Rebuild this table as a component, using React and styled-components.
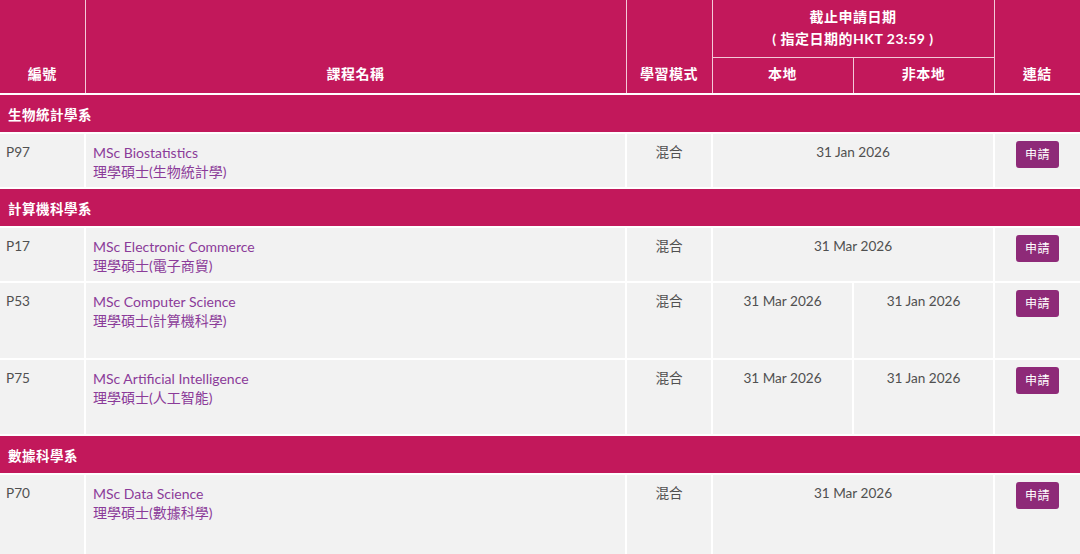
import React from "react";
import styled, { createGlobalStyle } from "styled-components";

const Global = createGlobalStyle`
  html, body { margin: 0; padding: 0; background: #f2f2f2; }
  body { font-family: "Lato", "Noto Sans CJK TC", sans-serif; }
`;

const MAGENTA = "#c2185b";

const Table = styled.table`
  width: 1080px;
  border-collapse: collapse;
  table-layout: fixed;
  font-family: "Lato", "Noto Sans CJK TC", sans-serif;
`;

const Head = styled.thead`
  background: ${MAGENTA};
`;

const Th = styled.th`
  box-sizing: border-box;
  color: #fff;
  font-weight: 700;
  font-size: 14px;
  letter-spacing: 0.5px;
  text-align: center;
  vertical-align: ${(p) => (p.$top ? "top" : "bottom")};
  padding: ${(p) => (p.$top ? "6px 0 0" : "0 0 8px")};
  line-height: 22px;
  border: 1px solid #f3c9d8;
  border-top: none;
  height: ${(p) => p.$h || "auto"};
  &:first-child { border-left: none; }
  &:last-child { border-right: none; }
`;

const DeptRow = styled.tr`
  background: ${MAGENTA};
`;

const DeptCell = styled.td`
  color: #fff;
  font-weight: 700;
  font-size: 13.5px;
  letter-spacing: 0.5px;
  height: 37px;
  padding: 0 0 0 8px;
  border-top: 2px solid #fff;
  border-bottom: 2px solid #fff;
`;

const Row = styled.tr`
  background: #f2f2f2;
  height: ${(p) => p.$h}px;
`;

const Td = styled.td`
  vertical-align: top;
  padding: 9px 0 0;
  padding-left: ${(p) => (p.$first ? "6px" : p.$center ? "0" : "7px")};
  text-align: ${(p) => (p.$center ? "center" : "left")};
  font-size: 13.6px;
  line-height: 19px;
  color: #505050;
  border: 2px solid #fff;
  &:first-child { border-left: none; }
  &:last-child { border-right: none; }
`;

const CourseName = styled.div`
  color: #8b3b99;
  font-size: 14px;
`;

const ButtonWrap = styled.div`
  display: flex;
  justify-content: center;
  margin-top: -2px;
`;

const ApplyButton = styled.a`
  display: flex;
  align-items: center;
  justify-content: center;
  width: 43px;
  height: 27px;
  background: #8e2a78;
  border-radius: 3px;
  color: #fff;
  font-size: 12px;
  line-height: 1;
  letter-spacing: 0.5px;
  text-decoration: none;
  cursor: pointer;
`;

const sections = [
  {
    dept: "生物統計學系",
    rows: [
      { code: "P97", en: "MSc Biostatistics", zh: "理學碩士(生物統計學)", local: "31 Jan 2026", h: 55 },
    ],
  },
  {
    dept: "計算機科學系",
    rows: [
      { code: "P17", en: "MSc Electronic Commerce", zh: "理學碩士(電子商貿)", local: "31 Mar 2026", h: 55 },
      { code: "P53", en: "MSc Computer Science", zh: "理學碩士(計算機科學)", local: "31 Mar 2026", non: "31 Jan 2026", h: 77 },
      { code: "P75", en: "MSc Artificial Intelligence", zh: "理學碩士(人工智能)", local: "31 Mar 2026", non: "31 Jan 2026", h: 76 },
    ],
  },
  {
    dept: "數據科學系",
    rows: [
      { code: "P70", en: "MSc Data Science", zh: "理學碩士(數據科學)", local: "31 Mar 2026", h: 82 },
    ],
  },
];

export default function App() {
  return (
    <>
      <Global />
      <Table>
        <colgroup>
          <col style={{ width: 85 }} />
          <col style={{ width: 541 }} />
          <col style={{ width: 86 }} />
          <col style={{ width: 141 }} />
          <col style={{ width: 141 }} />
          <col style={{ width: 86 }} />
        </colgroup>
        <Head>
          <tr>
            <Th rowSpan={2}>編號</Th>
            <Th rowSpan={2}>課程名稱</Th>
            <Th rowSpan={2}>學習模式</Th>
            <Th colSpan={2} $top $h="57px">
              截止申請日期
              <br />( 指定日期的HKT 23:59 )
            </Th>
            <Th rowSpan={2}>連結</Th>
          </tr>
          <tr>
            <Th $h="37px">本地</Th>
            <Th $h="37px">非本地</Th>
          </tr>
        </Head>
        <tbody>
          {sections.map((s) => (
            <React.Fragment key={s.dept}>
              <DeptRow>
                <DeptCell colSpan={6}>{s.dept}</DeptCell>
              </DeptRow>
              {s.rows.map((r) => (
                <Row key={r.code} $h={r.h}>
                  <Td $first>{r.code}</Td>
                  <Td>
                    <CourseName>{r.en}</CourseName>
                    <CourseName>{r.zh}</CourseName>
                  </Td>
                  <Td $center>混合</Td>
                  {r.non ? (
                    <>
                      <Td $center>{r.local}</Td>
                      <Td $center>{r.non}</Td>
                    </>
                  ) : (
                    <Td $center colSpan={2}>{r.local}</Td>
                  )}
                  <Td $center>
                    <ButtonWrap>
                      <ApplyButton>申請</ApplyButton>
                    </ButtonWrap>
                  </Td>
                </Row>
              ))}
            </React.Fragment>
          ))}
        </tbody>
      </Table>
    </>
  );
}
